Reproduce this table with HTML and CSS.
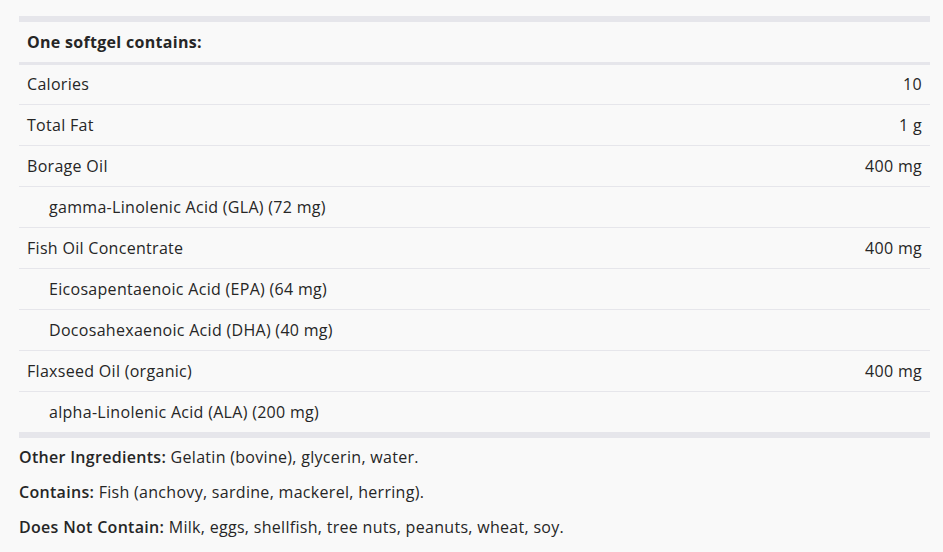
FILE: index.html
```html
<!DOCTYPE html>
<html lang="en">
<head>
    <meta charset="UTF-8">
    <meta name="viewport" content="width=device-width, initial-scale=1.0">
    <title>Supplement Facts</title>
    <link rel="stylesheet" href="styles.css">
</head>
<body>
    <main class="facts">
        <table class="facts-table">
            <thead>
                <tr>
                    <th colspan="2">One softgel contains:</th>
                </tr>
            </thead>
            <tbody>
                <tr><td>Calories</td><td class="amount">10</td></tr>
                <tr><td>Total Fat</td><td class="amount">1 g</td></tr>
                <tr><td>Borage Oil</td><td class="amount">400 mg</td></tr>
                <tr class="sub"><td>gamma-Linolenic Acid (GLA) (72 mg)</td><td class="amount"></td></tr>
                <tr><td>Fish Oil Concentrate</td><td class="amount">400 mg</td></tr>
                <tr class="sub"><td>Eicosapentaenoic Acid (EPA) (64 mg)</td><td class="amount"></td></tr>
                <tr class="sub"><td>Docosahexaenoic Acid (DHA) (40 mg)</td><td class="amount"></td></tr>
                <tr><td>Flaxseed Oil (organic)</td><td class="amount">400 mg</td></tr>
                <tr class="sub"><td>alpha-Linolenic Acid (ALA) (200 mg)</td><td class="amount"></td></tr>
            </tbody>
        </table>

        <div class="notes">
            <p><strong>Other Ingredients:</strong> Gelatin (bovine), glycerin, water.</p>
            <p><strong>Contains:</strong> Fish (anchovy, sardine, mackerel, herring).</p>
            <p><strong>Does Not Contain:</strong> Milk, eggs, shellfish, tree nuts, peanuts, wheat, soy.</p>
        </div>
    </main>
</body>
</html>
```

FILE: styles.css
```css
body {
    margin: 0;
    padding: 16px 13px 0 19px;
    background: #f9f9f9;
    color: #262626;
    font-family: "Open Sans", "Noto Sans", sans-serif;
    font-size: 16px;
    letter-spacing: 0.3px;
}
.facts-table {
    width: 100%;
    border-collapse: collapse;
    border-top: 6px solid #e6e6eb;
    border-bottom: 6px solid #e6e6eb;
}
.facts-table th {
    text-align: left;
    font-weight: 700;
    padding: 10px 8px;
    line-height: 20px;
    border-bottom: 3px solid #e6e6eb;
}
.facts-table td {
    padding: 10px 8px;
    line-height: 20px;
    border-top: 1px solid #e6e6eb;
}
.facts-table tbody tr:first-child td {
    border-top: none;
    padding-top: 9px;
}
.facts-table .sub td:first-child {
    padding-left: 30px;
}
.facts-table .amount {
    text-align: right;
}
.notes p {
    margin: 0;
    line-height: 20px;
    padding: 9px 0 6px;
}
.notes strong {
    font-weight: 600;
}
```
